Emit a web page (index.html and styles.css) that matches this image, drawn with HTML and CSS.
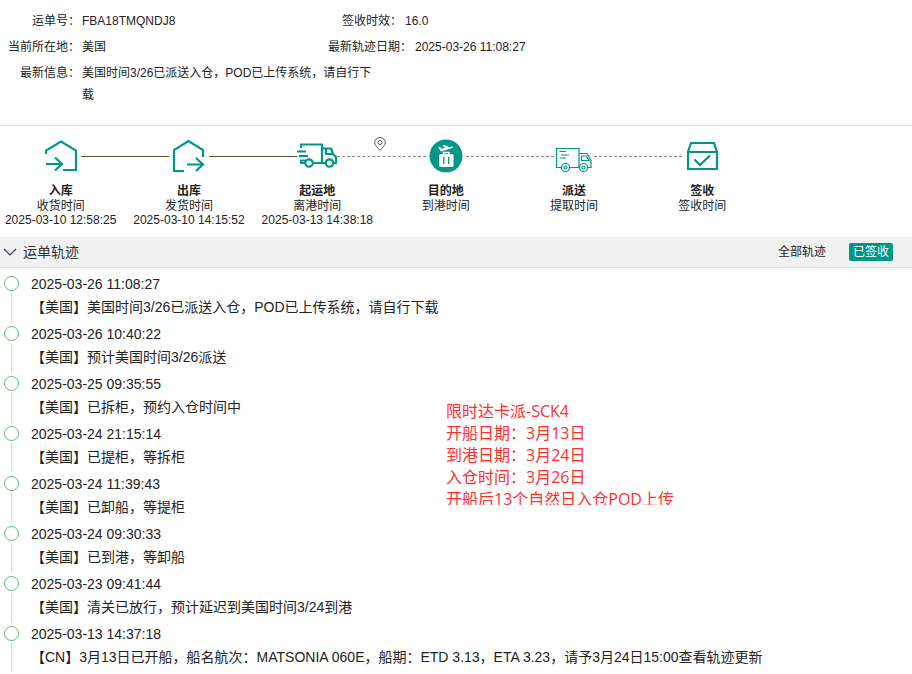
FILE: index.html
```html
<!DOCTYPE html>
<html lang="zh-CN">

<head>
    <meta charset="UTF-8">
    <meta name="viewport" content="width=device-width, initial-scale=1.0">
    <title>运单轨迹</title>
    <link rel="stylesheet" href="styles.css">
</head>

<body>
    <!-- Waybill info -->
    <section class="info">
        <dl class="info-col">
            <div class="info-row"><dt>运单号：</dt><dd>FBA18TMQNDJ8</dd></div>
            <div class="info-row"><dt>当前所在地：</dt><dd>美国</dd></div>
            <div class="info-row"><dt>最新信息：</dt><dd>美国时间3/26已派送入仓，POD已上传系统，请自行下载</dd></div>
        </dl>
        <dl class="info-col second">
            <div class="info-row"><dt>签收时效：</dt><dd>16.0</dd></div>
            <div class="info-row"><dt>最新轨迹日期：</dt><dd>2025-03-26 11:08:27</dd></div>
        </dl>
    </section>

    <!-- Progress steps -->
    <ol class="steps">
        <li class="step done">
            <div class="step-head">
                <svg class="icon" viewBox="0 0 40 40" fill="none" stroke="currentColor" stroke-width="2.2">
                    <path d="M5 18V14.500L20 5.500L35 14.500V34H22M5 28H20M14 21.500L21 28L14 34.500"/>
                </svg>
                <span class="line"></span>
            </div>
            <h3>入库</h3>
            <p>收货时间</p>
            <time>2025-03-10 12:58:25</time>
        </li>
        <li class="step done">
            <div class="step-head">
                <svg class="icon" viewBox="0 0 40 40" fill="none" stroke="currentColor" stroke-width="2.2">
                    <path d="M15 35H5V14L19.500 5L34 14V21M18 28.500H34M27 22L34 28.500L27 35"/>
                </svg>
                <span class="line"></span>
            </div>
            <h3>出库</h3>
            <p>发货时间</p>
            <time>2025-03-10 14:15:52</time>
        </li>
        <li class="step">
            <div class="step-head">
                <svg class="icon" viewBox="0 0 40 40" fill="none" stroke="currentColor" stroke-width="2.200" stroke-linejoin="round">
                    <path d="M4 12V8.500H25V27H16M8 27H4V24M0 15.500H9M2 20H11M3 24.500H8M25 12.500H34L36 18L39 21V27H36.500M29 27H25M29 13V18H36"/>
                    <circle cx="12" cy="27" r="3.700"/>
                    <circle cx="32.500" cy="27" r="3.700"/>
                </svg>
                <span class="line"></span>
                <svg class="pin" viewBox="0 0 12 14" fill="none" stroke="#555">
                    <path d="M6 13.300C3.500 10.500 .700 8.300 .700 5.500A5.300 5 0 0 1 11.300 5.500C11.300 8.300 8.500 10.500 6 13.300Z"/>
                    <circle cx="6" cy="5.500" r="2"/>
                </svg>
            </div>
            <h3>起运地</h3>
            <p>离港时间</p>
            <time>2025-03-13 14:38:18</time>
        </li>
        <li class="step">
            <div class="step-head">
                <svg class="icon" viewBox="0 0 40 40">
                    <circle cx="20" cy="20" r="16.500" fill="currentColor"/>
                    <rect x="13" y="18" width="14.500" height="13" rx="1.500" fill="#fff"/>
                    <path d="M17.500 18.500V16.500H23V18.500" fill="none" stroke="#fff" stroke-width="1.500"/>
                    <path d="M17.800 21V28M22.700 21V28" stroke="currentColor" stroke-width="1.300"/>
                    <path d="M12 11.500L13.500 11L16 12.500L19 12L16.500 9.500L18.500 9L23 11L26.500 10.500Q28 11 26.500 12L15 15.500Z" fill="#fff"/>
                </svg>
                <span class="line"></span>
            </div>
            <h3>目的地</h3>
            <p>到港时间</p>
        </li>
        <li class="step">
            <div class="step-head">
                <svg class="icon" viewBox="0 0 40 40" fill="none" stroke="currentColor" stroke-width="1.2">
                    <path d="M7.500 31.500H2.500V12.500H25V31.500H15.500M25 17.500H33L37 24.500V31.500H33.500M5.500 15.500H12M7 19H15M5.500 22H12M27.500 20H32.500L35 24.500H27.500Z"/>
                    <circle cx="11.500" cy="31.500" r="4"/>
                    <circle cx="11.500" cy="31.500" r="1.500"/>
                    <circle cx="29.500" cy="31.500" r="4"/>
                    <circle cx="29.500" cy="31.500" r="1.500"/>
                </svg>
                <span class="line"></span>
            </div>
            <h3>派送</h3>
            <p>提取时间</p>
        </li>
        <li class="step">
            <div class="step-head">
                <svg class="icon" viewBox="0 0 40 40" fill="none" stroke="currentColor" stroke-width="2.2">
                    <path d="M6 16L9 7H32L35 16V33H6ZM6 16H35M12.500 23.500L18 29L28 19.500"/>
                </svg>
            </div>
            <h3>签收</h3>
            <p>签收时间</p>
        </li>
    </ol>

    <!-- Tracking list -->
    <div class="bar">
        <button type="button" class="toggle">
            <svg class="arrow" viewBox="0 0 14 14" fill="none" stroke="currentColor" stroke-width="1.200">
                <path d="M1 4L7 10L13 4"/>
            </svg>
            运单轨迹
        </button>
        <a class="all" href="#track">全部轨迹</a>
        <span class="tag">已签收</span>
    </div>

    <div class="track" id="track">
        <ul class="timeline">
            <li><time>2025-03-26 11:08:27</time><p>【美国】美国时间3/26已派送入仓，POD已上传系统，请自行下载</p></li>
            <li><time>2025-03-26 10:40:22</time><p>【美国】预计美国时间3/26派送</p></li>
            <li><time>2025-03-25 09:35:55</time><p>【美国】已拆柜，预约入仓时间中</p></li>
            <li><time>2025-03-24 21:15:14</time><p>【美国】已提柜，等拆柜</p></li>
            <li><time>2025-03-24 11:39:43</time><p>【美国】已卸船，等提柜</p></li>
            <li><time>2025-03-24 09:30:33</time><p>【美国】已到港，等卸船</p></li>
            <li><time>2025-03-23 09:41:44</time><p>【美国】清关已放行，预计延迟到美国时间3/24到港</p></li>
            <li><time>2025-03-13 14:37:18</time><p>【CN】3月13日已开船，船名航次：MATSONIA 060E，船期：ETD 3.13，ETA 3.23，请予3月24日15:00查看轨迹更新</p></li>
        </ul>

        <div class="note">
            <p>限时达卡派-SCK4</p>
            <p>开船日期：3月13日</p>
            <p>到港日期：3月24日</p>
            <p>入仓时间：3月26日</p>
            <p>开船后13个自然日入仓POD上传</p>
        </div>
    </div>
</body>

</html>
```
FILE: styles.css
```css
*,
*::before,
*::after {
    box-sizing: border-box;
}

body {
    margin: 0;
    font-family: "Liberation Sans", "Noto Sans CJK SC", sans-serif;
    font-size: 12px;
    color: #222;
    background: #fff;
}

h3,
p,
dl,
dd,
ol,
ul {
    margin: 0;
    padding: 0;
}

ol,
ul {
    list-style: none;
}

/* waybill info */
.info {
    display: flex;
    padding: 8px 0 17px 8px;
    border-bottom: 1px solid #e3e3e3;
}

.info-col {
    width: 320px;
}

.info-col.second {
    flex: 1;
}

.info-row {
    display: flex;
    gap: 2px;
    line-height: 26px;
}

.info-row dt {
    min-width: 72px;
    text-align: right;
    white-space: nowrap;
}

.info-row dd {
    flex: none;
    max-width: 296px;
    padding: 2px 0;
    line-height: 22px;
}

.second .info-row {
    gap: 3px;
}

.second .info-row dt {
    min-width: 74px;
}

/* steps */
.steps {
    display: grid;
    grid-template-columns: repeat(6, 1fr);
    gap: 7px;
    padding: 10px 149px 10px 0;
    text-align: center;
}

.step h3,
.step p,
.step time {
    display: block;
    font-size: 12px;
    line-height: 14px;
    white-space: nowrap;
}

.step h3 {
    margin-top: 7px;
    line-height: 16px;
}

.step-head {
    position: relative;
    display: flex;
    align-items: center;
    width: calc(100% + 7px);
    margin-left: calc(50% - 20px);
    color: #009688;
}

.icon {
    flex: none;
    width: 40px;
    height: 40px;
}

.line {
    flex: 1;
    border-top: 1px dashed #888;
}

.done .line {
    border-top: 1px solid #55502f;
}

.pin {
    position: absolute;
    top: 1px;
    left: 77px;
    width: 12px;
    height: 14px;
}

/* title bar */
.bar {
    display: flex;
    align-items: center;
    height: 31px;
    padding: 0 19px 1px 3px;
    background: #f1f1f1;
    border-bottom: 1px solid #e3e3e3;
}

.toggle {
    display: flex;
    align-items: center;
    gap: 6px;
    margin-right: auto;
    padding: 0;
    border: none;
    background: none;
    font-family: inherit;
    font-size: 14px;
    line-height: 20px;
    color: #333;
    cursor: pointer;
}

.arrow {
    width: 14px;
    height: 14px;
    color: #2f4056;
}

.all {
    margin-right: 23px;
    line-height: 18px;
    color: #222;
    text-decoration: none;
}

.tag {
    padding: 0 4px;
    line-height: 18px;
    color: #fff;
    background: #009688;
    border-radius: 2px;
}

/* timeline */
.track {
    position: relative;
}

.timeline {
    padding-top: 5px;
    font-size: 14px;
    line-height: 23px;
}

.timeline li {
    display: grid;
    grid-template-columns: 15px 1fr;
    grid-template-rows: 23px auto;
    column-gap: 12px;
    padding: 0 4px 4px 4px;
}

.timeline li::before {
    content: "";
    width: 15px;
    height: 15px;
    margin-top: 3px;
    border: 1px solid #5fb878;
    border-radius: 50%;
}

.timeline li::after {
    content: "";
    grid-column: 1;
    grid-row: 2;
    justify-self: center;
    width: 1px;
    margin: -3px 0;
    background: #ddd;
}

.timeline p {
    grid-column: 2;
    grid-row: 2;
}

/* red note over the list */
.note {
    position: absolute;
    top: 132px;
    left: 446px;
    height: 105px;
    overflow: hidden;
    font-family: "Open Sans", "Noto Sans CJK SC", sans-serif;
    font-size: 16px;
    line-height: 22px;
    color: #ff3030;
    white-space: nowrap;
    background: #fff;
}
```
